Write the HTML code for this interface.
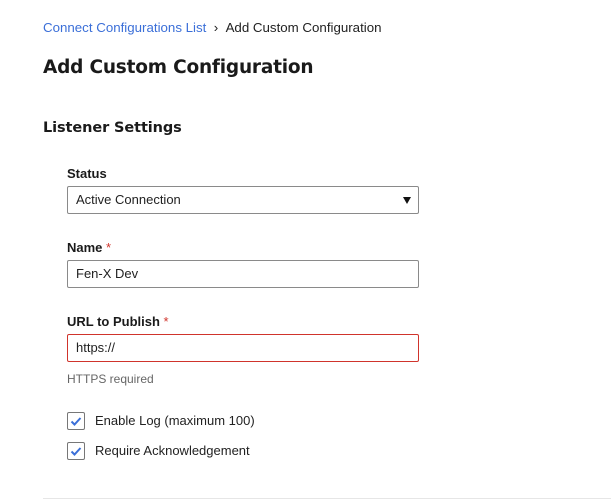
<!DOCTYPE html>
<html><head><meta charset="utf-8"><style>
*{margin:0;padding:0;box-sizing:border-box}
body{width:611px;height:500px;background:#fff;font-family:"Liberation Sans",Arial,sans-serif;color:#222;position:relative;overflow:hidden}
.a{position:absolute;white-space:nowrap}
.bc{left:43px;top:20px;font-size:13.3px;color:#222}
.bc span.l{color:#3b6fd8}
h1{position:absolute;left:43px;top:57px;font-family:"DejaVu Sans",sans-serif;font-weight:bold;font-size:18.5px;letter-spacing:-0.2px;color:#1a1a1a}
h2{position:absolute;left:43px;top:120px;font-family:"DejaVu Sans",sans-serif;font-weight:bold;font-size:14.5px;letter-spacing:-0.1px;color:#1a1a1a}
.lab{left:67px;font-size:13px;font-weight:bold;color:#1a1a1a}
.lab i{color:#d0342c;font-style:normal;font-weight:normal}
.box{position:absolute;left:67px;width:352px;height:28px;border:1px solid #8a8a8a;border-radius:2px;font-size:13px;padding:5px 8px;color:#222}
.red{border-color:#d0342c}
.arr{position:absolute;right:7px;top:10px;width:0;height:0;border-left:4.5px solid transparent;border-right:4.5px solid transparent;border-top:7px solid #111}
.cb{position:absolute;left:67px;width:18px;height:18px;border:1px solid #777;border-radius:2px}
.ct{left:95px;font-size:13px;color:#222}
</style></head><body>
<div class="a bc"><span class="l">Connect Configurations List</span>&nbsp; › &nbsp;Add Custom Configuration</div>
<h1>Add Custom Configuration</h1>
<h2>Listener Settings</h2>
<div class="a lab" style="top:166px">Status</div>
<div class="box" style="top:186px">Active Connection<div class="arr"></div></div>
<div class="a lab" style="top:240px">Name <i>*</i></div>
<div class="box" style="top:260px">Fen-X Dev</div>
<div class="a lab" style="top:314px">URL to Publish <i>*</i></div>
<div class="box red" style="top:334px">https://</div>
<div class="a" style="left:67px;top:372px;font-size:12px;color:#666">HTTPS required</div>
<div class="cb" style="top:412px"><svg width="16" height="16" viewBox="0 0 16 16"><path d="M3.5 8.5l3 3 6-6.5" fill="none" stroke="#3b6fd8" stroke-width="2"/></svg></div>
<div class="a ct" style="top:413px">Enable Log (maximum 100)</div>
<div class="cb" style="top:442px"><svg width="16" height="16" viewBox="0 0 16 16"><path d="M3.5 8.5l3 3 6-6.5" fill="none" stroke="#3b6fd8" stroke-width="2"/></svg></div>
<div class="a ct" style="top:443px">Require Acknowledgement</div>
<div class="a" style="left:43px;top:498px;width:568px;height:1px;background:#e6e6e6"></div>
</body></html>
